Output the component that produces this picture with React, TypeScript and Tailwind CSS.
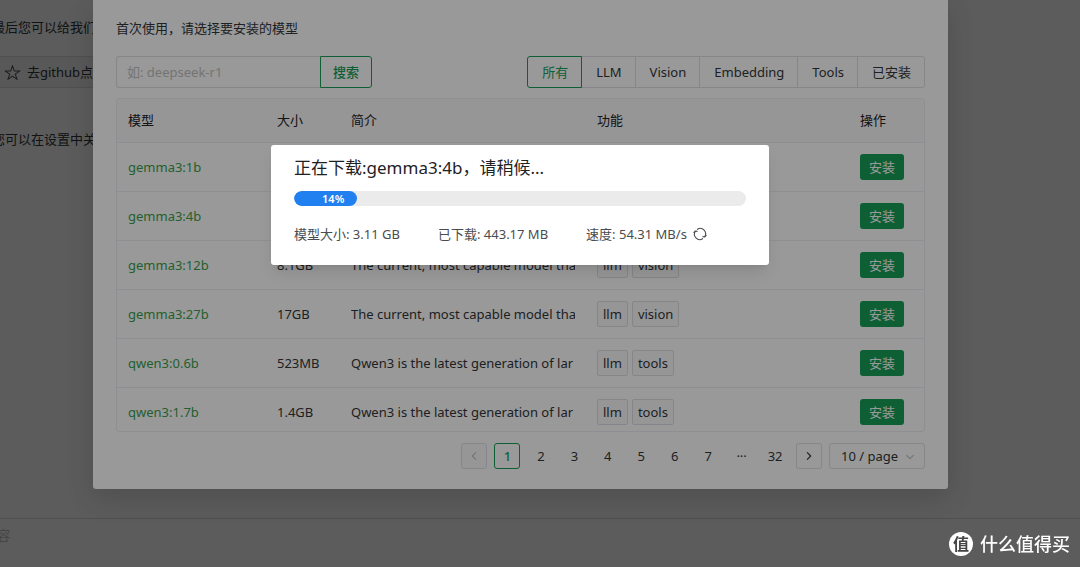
import { useState } from 'react'
import { IoChevronBack, IoChevronDown, IoChevronForward, IoStarOutline } from 'react-icons/io5'
import clsx from 'clsx'

interface Model {
  name: string;
  size?: string;
  desc?: string;
  tags?: string[];
}

const GEMMA_DESC = 'The current, most capable model that'
const QWEN_DESC = 'Qwen3 is the latest generation of lar'

const models: Model[] = [
  { name: 'gemma3:1b' },
  { name: 'gemma3:4b' },
  { name: 'gemma3:12b', size: '8.1GB', desc: GEMMA_DESC, tags: ['llm', 'vision'] },
  { name: 'gemma3:27b', size: '17GB', desc: GEMMA_DESC, tags: ['llm', 'vision'] },
  { name: 'qwen3:0.6b', size: '523MB', desc: QWEN_DESC, tags: ['llm', 'tools'] },
  { name: 'qwen3:1.7b', size: '1.4GB', desc: QWEN_DESC, tags: ['llm', 'tools'] },
]

const filters = ['所有', 'LLM', 'Vision', 'Embedding', 'Tools', '已安装']
const pages = ['1', '2', '3', '4', '5', '6', '7', '···', '32']

function SyncIcon() {
  return (
    <svg viewBox="0 0 14 14" className="size-[14px]" fill="none" stroke="currentColor" strokeWidth="1.1" strokeLinecap="round" strokeLinejoin="round">
      <path d="M4.4 2.3A5.3 5.3 0 0 1 11.6 9.8M9.9 9.6l1.7.4 1.5-1.3" />
      <path d="M9.6 11.7A5.3 5.3 0 0 1 2.4 4.2M4.1 4.4L2.4 4L.9 5.3" />
    </svg>
  )
}

// Página de conversa que fica por trás do modal
function ChatPage() {
  return (
    <div className="fixed inset-0 flex flex-col overflow-hidden bg-white">
      <div className="flex-1 overflow-hidden whitespace-nowrap">
        <p className="-ml-2 mt-[17px]">最后您可以给我们</p>
        <button className="mt-[19px] flex h-8 w-[200px] items-center gap-1.5 border-y border-[#e0e0e6] bg-[#f5f5f5] pl-1">
          <IoStarOutline className="size-[17px] text-[#555]" />
          去github点
        </button>
        <p className="-ml-2 mt-[41px]">您可以在设置中关</p>
      </div>
      <div className="h-[49px] border-t border-[#dcdcdc]">
        <textarea
          aria-label="内容"
          placeholder="容"
          className="-ml-[3px] block h-10 w-full resize-none pt-1.5 outline-none placeholder:text-[#c2c2c2]"
        />
      </div>
    </div>
  )
}

function FilterGroup() {
  const [active, setActive] = useState('所有')

  return (
    <div className="flex h-8">
      {filters.map(item => (
        <button
          key={item}
          onClick={() => setActive(item)}
          className={clsx(
            '-ml-px border pr-[13px] pl-[14px] first:rounded-l-[3px] last:rounded-r-[3px]',
            active === item ? 'relative border-[#18a058] text-[#18a058]' : 'border-[#e0e0e6]'
          )}
        >
          {item}
        </button>
      ))}
    </div>
  )
}

function ModelTable() {
  return (
    <div className="mt-[10px] h-[334px] overflow-hidden rounded-[3px] border border-[#efeff5]">
      <table className="w-full table-fixed text-left">
        <thead>
          <tr className="h-[43px] border-b border-[#efeff5] bg-[#fafafc] text-[#1f2225]">
            <th className="w-[149px] px-[11px] font-normal">模型</th>
            <th className="w-[74px] px-[11px] font-normal">大小</th>
            <th className="w-[246px] px-[11px] font-normal">简介</th>
            <th className="px-[11px] font-normal">功能</th>
            <th className="w-[75px] px-[11px] font-normal">操作</th>
          </tr>
        </thead>
        <tbody>
          {models.map(model => (
            <tr key={model.name} className="h-[49px] border-b border-[#efeff5]">
              <td className="px-[11px] text-[#3c9f4c]">{model.name}</td>
              <td className="px-[11px]">{model.size}</td>
              <td className="px-[11px]">
                <div className="overflow-hidden whitespace-nowrap">{model.desc}</div>
              </td>
              <td className="px-[11px]">
                <div className="flex gap-1">
                  {model.tags?.map(tag => (
                    <span key={tag} className="flex h-[26px] items-center rounded-[2px] border border-[#e0e0e6] bg-[#fafafc] px-[5px]">
                      {tag}
                    </span>
                  ))}
                </div>
              </td>
              <td className="px-[11px]">
                <button className="block h-[26px] rounded-[3px] bg-[#18a058] px-[9px] text-white">安装</button>
              </td>
            </tr>
          ))}
        </tbody>
      </table>
    </div>
  )
}

function Pagination() {
  const [page, setPage] = useState('1')

  return (
    <div className="mt-[11px] flex justify-end">
      <div className="flex w-[464px] items-center justify-between">
        <button aria-label="Previous" className="flex size-[26px] items-center justify-center rounded-[3px] border border-[#e0e0e6] bg-[#fafafc] text-[#c2c2c2]">
          <IoChevronBack className="size-3" />
        </button>
        {pages.map(item => (
          <button
            key={item}
            onClick={() => setPage(item)}
            className={clsx(
              'flex size-[26px] items-center justify-center rounded-[3px]',
              page === item && 'border border-[#18a058] font-medium text-[#18a058]'
            )}
          >
            {item}
          </button>
        ))}
        <button aria-label="Next" className="flex size-[26px] items-center justify-center rounded-[3px] border border-[#e0e0e6]">
          <IoChevronForward className="size-3" />
        </button>
        <div className="relative">
          <select aria-label="Page size" className="block h-[26px] w-24 appearance-none rounded-[3px] border border-[#e0e0e6] pl-[11px]">
            <option>10 / page</option>
            <option>20 / page</option>
          </select>
          <IoChevronDown className="pointer-events-none absolute top-2 right-[9px] size-3 text-[#c2c2c2]" />
        </div>
      </div>
    </div>
  )
}

function DownloadDialog({ percent }: { percent: number }) {
  return (
    <div role="dialog" className="ml-[271px] mt-[145px] h-[120px] w-[498px] rounded-[3px] bg-white px-[23px] pt-[10px] shadow-lg">
      <h2 className="text-[17px] leading-[26px] text-[#1f2225]">正在下载:gemma3:4b，请稍候...</h2>
      <div className="mt-[10px] h-[15px] overflow-hidden rounded-full bg-[#ebebeb]">
        <div
          className="flex h-full items-center justify-end rounded-full bg-[#2080f0] pr-[13px] text-[11px] font-semibold text-white"
          style={{ width: `${percent}%` }}
        >
          {percent}%
        </div>
      </div>
      <div className="mt-[18px] flex gap-[38px] text-[#494c50]">
        <span>模型大小: 3.11 GB</span>
        <span>已下载: 443.17 MB</span>
        <span className="flex items-center gap-1.5">
          速度: 54.31 MB/s
          <SyncIcon />
        </span>
      </div>
    </div>
  )
}

export default function App() {
  return (
    <div className="font-['Noto_Sans','Noto_Sans_CJK_SC',sans-serif] text-[13px] leading-5 text-[#333639]">
      <ChatPage />

      <div className="fixed inset-0 bg-black/40">
        <div role="dialog" className="mr-[132px] ml-[93px] rounded-b-[3px] bg-white px-[23px] pt-[18px] pb-5 shadow-[0_9px_28px_0_rgba(0,0,0,0.15)]">
          <p>首次使用，请选择要安装的模型</p>
          <div className="mt-[18px] flex justify-between">
            <div className="flex h-8">
              <input
                type="text"
                aria-label="模型"
                placeholder="如: deepseek-r1"
                className="w-[204px] rounded-l-[3px] border border-r-0 border-[#e0e0e6] px-[10px] outline-none placeholder:text-[#c2c2c2]"
              />
              <button className="w-[52px] rounded-r-[3px] border border-[#18a058] font-medium text-[#18a058]">搜索</button>
            </div>
            <FilterGroup />
          </div>
          <ModelTable />
          <Pagination />
        </div>
      </div>

      <div className="fixed inset-0 bg-black/40">
        <DownloadDialog percent={14} />
      </div>

      {/* Marca d'água */}
      <div className="fixed right-[10px] bottom-[11px] flex items-center gap-[7px] text-white">
        <span className="flex size-6 items-center justify-center rounded-full bg-white text-[16px] font-bold text-[#444]">值</span>
        <span className="text-[18px] leading-6 font-medium">什么值得买</span>
      </div>
    </div>
  )
}
